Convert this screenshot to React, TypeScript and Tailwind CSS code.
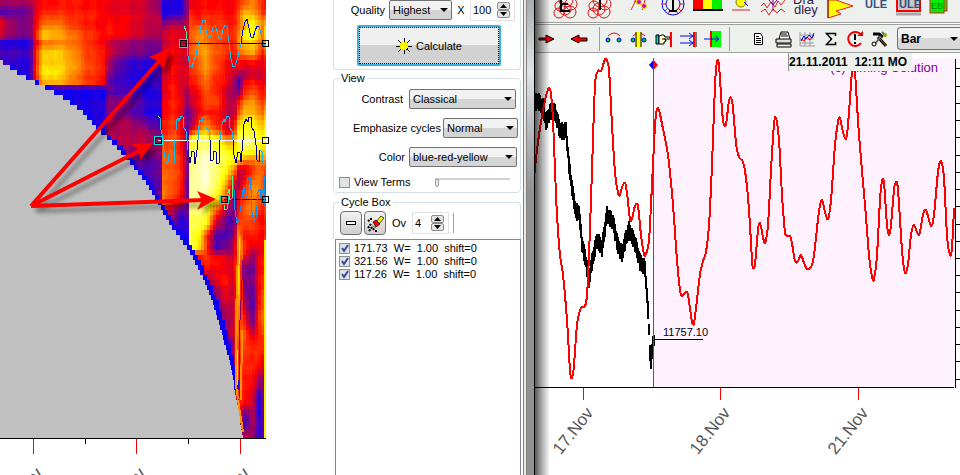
import React, { useState } from "react";

type Point = [number, number];

// each character is one heat value in base 36: 0 blue, a red, k yellow, u white
const HEAT_X = [
  0, 10, 30, 35, 42, 55, 70, 88, 103, 108, 125, 145, 160, 163, 172, 180, 187, 190, 198, 206, 216,
  226, 234, 238, 244, 252, 258, 263, 265,
];

const HEAT_ROWS: [number, string][] = [
  [0, "777 9aabaa 9985 211 69 aaaa abdfdb a"],
  [14, "334 9bcbba 9986 112 5b abba adigfb c"],
  [20, "a65 adecba aa87 455 7c bccb adjjhf g"],
  [26, "965 afgdba ba87 788 8d edcc behlie i"],
  [36, "854 bihfca a976 899 8d gedc bfklie i"],
  [43, "111 9effca 8655 899 7d gfdc bgiigd g"],
  [54, "332 cijgcb 8543 8a9 8d fgdc adfgda c"],
  [64, "221 biihdb 6212 8a9 8c egda 9a9999 a"],
  [74, "221 cjkgcb 5213 8a9 9b dfca 867889 9"],
  [83, "211 aghfca 3222 9a9 8a ceba 61aba9 a"],
  [85, "111 655555 5212 9b9 7a beb9 62aba9 a"],
  [89, "111 111111 3212 9b9 79 bdb8 63bcca b"],
  [98, "111 111111 5521 9ba 68 add8 69efdb c"],
  [112, "111 111112 5521 aba 45 abb8 7dihge h"],
  [124, "111 111111 7742 bcb 45 cfb8 9ikkih j"],
  [130, "111 111111 7774 bcb 49 fhe9 bkmlkj k"],
  [138, "111 111111 7775 cdc 4j onkf fmpnlk k"],
  [145, "111 111111 7777 ddb 4m oomj imqomk k"],
  [158, "111 111111 5544 edc 5p rsqm lkhfhf g"],
  [170, "111 111111 1334 edc 5p rsok f78bed c"],
  [185, "111 111111 1114 fdc 4q rsog 86cfgd a"],
  [200, "111 111111 1114 fca 4p qojb 4adfed d"],
  [210, "111 111111 1112 973 4o pmd6 4aefca c"],
  [222, "111 111111 1111 452 2n nl84 3cdcba b"],
  [235, "111 111111 1111 111 1n lc33 6fbbba b"],
  [251, "111 111111 1111 111 1m jc25 7ic79a k"],
  [253, "111 111111 1111 111 16 bca9 7ib69b k"],
  [266, "111 111111 1111 111 11 9ba9 9h63ab k"],
  [280, "111 111111 1111 111 11 169b 7i54ac k"],
  [300, "111 111111 1111 111 11 1149 7g72ae k"],
  [320, "111 111111 1111 111 11 1146 8eb3cf k"],
  [336, "111 111111 1111 111 11 1118 8ee8bc g"],
  [339, "111 111111 1111 111 11 1111 7ddacc g"],
  [358, "111 111111 1111 111 11 1111 6ccbca 3"],
  [380, "111 111111 1111 111 11 1111 4cba75 3"],
  [400, "111 111111 1111 111 11 1111 1cb815 3"],
  [420, "111 111111 1111 111 11 1111 1a1724 3"],
  [438, "111 111111 1111 111 11 1111 119624 2"],
];

const CONE: Point[] = [
  [0, 60], [17, 72], [35, 82], [60, 95], [80, 109], [96, 127], [108, 138], [128, 159],
  [145, 181], [158, 202], [171, 226], [180, 237], [190, 252], [200, 271], [213, 302],
  [222, 333], [230, 362], [235, 390], [239, 413], [243, 438],
];

function lerp(a: number, b: number, t: number) {
  return a + (b - a) * t;
}

function heatAt(x: number, y: number) {
  let r = 0;
  while (r < HEAT_ROWS.length - 2 && HEAT_ROWS[r + 1][0] <= y) r++;
  let c = 0;
  while (c < HEAT_X.length - 2 && HEAT_X[c + 1] <= x) c++;
  const top = HEAT_ROWS[r][1].replace(/ /g, "");
  const bottom = HEAT_ROWS[r + 1][1].replace(/ /g, "");
  const tx = (x - HEAT_X[c]) / (HEAT_X[c + 1] - HEAT_X[c]);
  const ty = (y - HEAT_ROWS[r][0]) / (HEAT_ROWS[r + 1][0] - HEAT_ROWS[r][0]);
  const value = (s: string) => lerp(parseInt(s[c], 36), parseInt(s[c + 1], 36), tx) / 10;
  return lerp(value(top), value(bottom), ty);
}

function coneLeft(y: number) {
  if (y < CONE[0][1]) return 0;
  for (let i = 0; i < CONE.length - 1; i++) {
    if (y < CONE[i + 1][1]) {
      const t = (y - CONE[i][1]) / (CONE[i + 1][1] - CONE[i][1]);
      return Math.round(lerp(CONE[i][0], CONE[i + 1][0], t));
    }
  }
  return 243;
}

function heatColor(v: number) {
  const b = (n: number) => Math.round(Math.max(0, Math.min(1, n)) * 255);
  if (v < 1) return `rgb(${b(v)},0,${b(1 - v)})`;
  if (v < 2) return `rgb(255,${b(v - 1)},0)`;
  return `rgb(255,255,${b(v - 2)})`;
}

// cells of one colour share one path
function buildHeat() {
  const paths: Record<string, string> = {};
  for (let y = 0; y < 438; y += 5) {
    const h = Math.min(5, 438 - y);
    const left = coneLeft(y + 2);
    for (let x = left; x < 266; ) {
      const w = Math.min(3 - (x % 3), 266 - x);
      const ripple = Math.sin(x * 1.7) * 0.03 + Math.sin(y * 0.9) * 0.03;
      let v = heatAt(x + 1, y + 2) + ripple;
      if (y > 60 && x < left + 4 && y < 390) v = 0.05;
      const color = heatColor(Math.round(Math.max(0, v) * 20) / 20);
      paths[color] = (paths[color] || "") + `M${x} ${y}h${w}v${h}h-${w}z`;
      x += w;
    }
  }
  return Object.entries(paths);
}

const heat = buildHeat();

function smooth(pts: Point[]) {
  let d = `M${pts[0][0]} ${pts[0][1]}`;
  for (let i = 0; i < pts.length - 1; i++) {
    const p0 = pts[Math.max(0, i - 1)];
    const p1 = pts[i];
    const p2 = pts[i + 1];
    const p3 = pts[Math.min(pts.length - 1, i + 2)];
    d += `C${p1[0] + (p2[0] - p0[0]) / 7} ${p1[1] + (p2[1] - p0[1]) / 7} ${p2[0] - (p3[0] - p1[0]) / 7} ${p2[1] - (p3[1] - p1[1]) / 7} ${p2[0]} ${p2[1]}`;
  }
  return d;
}

const RED_LINE: Point[] = [
  [534, 178], [537, 150], [541, 122], [546, 96], [549, 88], [551, 94], [553, 120], [555, 170],
  [557, 215], [560, 255], [563, 275], [567, 320], [570, 370], [572, 378], [574, 365], [577, 325],
  [581, 308], [585, 306], [587, 295], [589, 255], [592, 170], [595, 85], [598, 71], [601, 71],
  [604, 62], [606, 59], [609, 70], [612, 125], [615, 172], [618, 193], [620, 195], [622, 187],
  [625, 183], [627, 193], [630, 219], [632, 219], [635, 206], [638, 206], [641, 235], [644, 254],
  [646, 254], [649, 240], [652, 185], [655, 125], [657, 109], [659, 110], [662, 124], [668, 155],
  [673, 205], [677, 260], [680, 290], [682, 296], [687, 292], [690, 308], [692, 322], [694, 323],
  [697, 300], [700, 274], [703, 261], [706, 252], [709, 225], [712, 165], [715, 85], [717, 62],
  [719, 65], [722, 110], [724, 125], [726, 124], [729, 101], [731, 98], [733, 108], [736, 143],
  [739, 157], [743, 162], [746, 178], [749, 210], [752, 260], [753, 268], [755, 264], [758, 230],
  [760, 223], [763, 237], [765, 243], [768, 225], [771, 170], [774, 124], [776, 118], [779, 140],
  [782, 195], [785, 232], [788, 236], [791, 238], [795, 261], [798, 261], [801, 255], [804, 263],
  [807, 269], [811, 267], [814, 255], [819, 211], [822, 200], [825, 212], [828, 219], [831, 200],
  [835, 145], [838, 122], [840, 118], [843, 132], [846, 139], [848, 125], [851, 84], [853, 62],
  [855, 72], [859, 135], [865, 205], [869, 255], [872, 277], [874, 279], [877, 255], [880, 200],
  [882, 181], [884, 183], [887, 225], [889, 235], [891, 225], [894, 190], [896, 182], [898, 190],
  [902, 250], [905, 273], [908, 264], [911, 235], [914, 225], [919, 235], [923, 215], [926, 210],
  [931, 226], [934, 215], [938, 172], [941, 161], [944, 178], [947, 235], [950, 255], [952, 248],
  [954, 208],
];

const PRICE: Point[] = [
  [535, 103], [538, 101], [543, 107], [546, 122], [550, 112], [555, 112], [560, 131], [566, 131],
  [569, 165], [573, 195], [576, 212], [579, 212], [582, 243], [586, 262], [589, 280], [592, 262],
  [597, 240], [602, 248], [607, 215], [613, 222], [618, 246], [622, 254], [626, 238], [629, 230],
  [635, 243], [640, 262], [645, 268], [648, 310], [650, 352], [651, 362], [653, 342], [654, 342],
];

function priceBars() {
  let d = "";
  for (let x = 535; x <= 654; x++) {
    let i = 0;
    while (i < PRICE.length - 2 && PRICE[i + 1][0] <= x) i++;
    const t = (x - PRICE[i][0]) / (PRICE[i + 1][0] - PRICE[i][0]);
    const y = lerp(PRICE[i][1], PRICE[i + 1][1], t);
    const up = 5 + Math.abs(Math.sin(x * 2.3)) * 4;
    const down = 4 + Math.abs(Math.cos(x * 1.9)) * 5;
    d += `M${x} ${Math.round(y - up)}V${Math.round(y + down)}`;
  }
  return d;
}

const WAVE_1 = "187,45 188,56 190,66 192,67 194,60 196,55 199,41 201,26 203,20 205,20 206,29 208,36 211,36 213,27 215,25 217,31 219,38 221,38 223,29 225,25 227,27 229,42 231,59 233,67 235,66 238,57 241,43";
const WAVE_1_BLUE = "241,43 243,30 245,22 247,19 249,28 251,37 253,38 255,31 257,26 259,26";
const WAVE_2_CYAN = [
  "160,118 161,130 163,137 164,151 166,162 168,162 169,153 171,151 172,164 174,163 174,148 176,130 176,121 178,118 179,121 181,116 183,117 184,128 186,131 187,140 188,150",
  "198,140 199,126 200,120 202,122 203,117 205,117 206,128 209,131 210,140",
  "220,140 222,124 224,119 225,122 227,116 229,117 230,128 232,131 233,140",
  "260,150 262,152 263,164 265,163",
];
const WAVE_2_NAVY = [
  "188,150 190,163 192,151 194,152 195,164 197,150 198,140",
  "210,140 211,161 213,160 214,151 216,152 217,164 219,163 220,140",
  "233,140 234,155 236,163 238,152 240,153 241,162 243,140 244,124 246,119 248,122 249,117 251,117 252,128 254,131 256,145 257,160 259,162 260,150",
];
const WAVE_3 = "233,176 234,190 235,210 237,223 239,220 241,205 243,190 244,188 246,198 247,196 248,178 250,178 251,190 252,212 254,222 256,218 258,192 260,189 261,198 263,190 264,176 265,205";

function Handle({ x, y, ring }: { x: number; y: number; ring?: boolean }) {
  return (
    <g fill="none" shapeRendering="crispEdges">
      {ring && <rect x={x - 3.5} y={y - 3.5} width="8" height="8" stroke="#00e8e0" />}
      <rect x={x - 2.5} y={y - 2.5} width="6" height="6" stroke="#000" />
    </g>
  );
}

function PointerArrows() {
  return (
    <>
      <path d="M31 206L162 58M31 206L143 149M31 206L204 200" strokeWidth="4" fill="none" />
      <path d="M169 48L149 57L157 61L164 69Z" stroke="none" />
      <path d="M153 143L131 144L140 150L140 160Z" stroke="none" />
      <path d="M216 199L197 191L202 200L197 210Z" stroke="none" />
    </>
  );
}

function Spectrum() {
  return (
    <svg width="334" height="475" viewBox="0 0 334 475" role="img" aria-label="Cycle spectrum">
      <rect width="266" height="438" fill="#c0c0c0" />
      <g shapeRendering="crispEdges">
        {heat.map(([color, d]) => (
          <path key={color} d={d} fill={color} />
        ))}
        <g fill="none">
          <path d="M240 235L238 265L237 300L236 330" stroke="#ff9000" strokeWidth="3" />
          <path d="M240 238L239 265L238 295M237 350V385M241 360L242 400" stroke="#ffe000" />
          <path d="M236 330L236 385L238 400L243 432M242 330L241 400" stroke="#ff9000" strokeWidth="2" />
          <path d="M243 260L240 320L239 400M246 400L245 415" stroke="#900070" />
        </g>
        <path d="M265 240V438" stroke="#ffee00" strokeWidth="2" />
        <path d="M0 438.500H266" stroke="#000" />
        <path d="M85.500 439V444M188.500 439V444" stroke="#000" />
        <path d="M33.500 439V454M136.500 439V454M240.500 439V454" stroke="#f00" />
      </g>
      <g shapeRendering="crispEdges" fill="none">
        <path d="M183 43.500H266M224 199.500H266" stroke="#000" />
        <path d="M158 140.500H266" stroke="#fff" />
        <polyline points="184,26 186,31 187,45" stroke="#60f080" />
        <polyline points={WAVE_1} stroke="#20b8f0" />
        <polyline points={WAVE_1_BLUE} stroke="#0010e0" />
        <polyline points="259,26 261,34 263,44 265,45" stroke="#20a0f0" />
        <polyline points="158,116 160,118" stroke="#60f080" />
        {WAVE_2_CYAN.map((p) => (
          <polyline key={p} points={p} stroke="#18b8e8" />
        ))}
        {WAVE_2_NAVY.map((p) => (
          <polyline key={p} points={p} stroke="#000090" />
        ))}
        <polyline points="224,205 225,210 227,209 227,196 229,189 230,200 232,198 233,176" stroke="#60f080" />
        <polyline points={WAVE_3} stroke="#1090f0" />
      </g>
      <Handle x={183} y={43} ring />
      <Handle x={158} y={140} ring />
      <Handle x={224} y={199} ring />
      {[43, 140, 199].map((y) => (
        <Handle key={y} x={265} y={y} />
      ))}
      <g transform="translate(5 5)" fill="#000" stroke="#000" opacity="0.35" className="blur-[2px]">
        <PointerArrows />
      </g>
      <g fill="#f00" stroke="#f00">
        <PointerArrows />
      </g>
      <g className="font-['Liberation_Sans',sans-serif] text-[18px]" fill="#555" textAnchor="end">
        <text transform="translate(44 474) rotate(-52)">15.Nov</text>
        <text transform="translate(147 474) rotate(-52)">16.Nov</text>
        <text transform="translate(251 474) rotate(-52)">17.Nov</text>
      </g>
    </svg>
  );
}

type SelectProps = { id: string; options: string[]; className: string };

function Dropdown({ id, options, className }: SelectProps) {
  return (
    <div className={`relative ${className}`}>
      <select
        id={id}
        className="h-5 w-full appearance-none rounded-xs border border-[#707070] bg-linear-to-b from-[#f2f2f2] from-50% to-[#d4d4d4] to-50% pl-[3px] text-[11px] leading-4"
      >
        {options.map((o) => (
          <option key={o}>{o}</option>
        ))}
      </select>
      <svg className="pointer-events-none absolute top-2 right-1" width="8" height="5" viewBox="0 0 8 5">
        <path d="M0 0H8L4 4Z" />
      </svg>
    </div>
  );
}

function Spinner({ label, value, className }: { label: string; value: number; className: string }) {
  const [amount, setAmount] = useState(value);
  return (
    <div className={`flex h-[22px] items-center border border-[#e2e2e2] pr-1 ${className}`}>
      <input
        aria-label={label}
        value={amount}
        onChange={(e) => setAmount(Number(e.target.value) || 0)}
        className="w-full min-w-0 pl-[2px] text-[11px] outline-none"
      />
      <div className="flex flex-col">
        {[1, -1].map((step) => (
          <button
            key={step}
            type="button"
            aria-label={step > 0 ? `Increase ${label}` : `Decrease ${label}`}
            onClick={() => setAmount(amount + step)}
            className="flex h-2 w-[13px] items-center justify-center rounded-xs border border-[#8a8a8a] bg-[#e4e4e4]"
          >
            <svg width="7" height="4" viewBox="0 0 7 4">
              <path d={step > 0 ? "M0 4H7L3.500 0Z" : "M0 0H7L3.500 4Z"} />
            </svg>
          </button>
        ))}
      </div>
    </div>
  );
}

function Tick({ id, label, checked }: { id: string; label: string; checked?: boolean }) {
  const [on, setOn] = useState(!!checked);
  return (
    <label htmlFor={id} className="flex items-center gap-1 whitespace-pre">
      <span className="relative flex">
        <input
          id={id}
          type="checkbox"
          checked={on}
          onChange={() => setOn(!on)}
          className="size-[11px] appearance-none border border-[#8e8f8f] bg-[#e0e3e6]"
        />
        {on && (
          <svg className="pointer-events-none absolute inset-0" width="11" height="11" viewBox="0 0 11 11">
            <path d="M3 5L5 8L9 2" fill="none" stroke="#33479c" strokeWidth="2" />
          </svg>
        )}
      </span>
      {label}
    </label>
  );
}

const CYCLES = ["171.73", "321.56", "117.26"];

function Settings() {
  return (
    <section className="flex w-[188px] shrink-0 flex-col text-[11px] leading-[14px]">
      <div className="flex h-[70px] flex-col rounded-b-sm border border-t-0 border-[#d5dfe5]">
        <div className="-mt-px flex items-center gap-1 self-end pr-[5px]">
          <label htmlFor="quality">Quality</label>
          <Dropdown id="quality" options={["Highest", "High", "Low"]} className="w-[63px]" />
          <span className="w-[10px] text-center">X</span>
          <Spinner label="Repeat" value={100} className="w-[45px]" />
        </div>
        <button
          type="button"
          className="mt-1 ml-[23px] flex h-[41px] w-[144px] items-center justify-center rounded-xs border-2 border-[#3ab0e0] bg-linear-to-b from-[#f0f0f0] from-50% to-[#d2d2d2] to-50%"
        >
          <span className="flex h-full w-full items-center justify-center gap-1 border border-dotted border-black">
            <svg width="16" height="16" viewBox="0 0 16 16" stroke="#000" shapeRendering="crispEdges">
              <path d="M8 0V16M0 8H16M2 2L14 14M14 2L2 14" />
              <circle cx="8" cy="8" r="4" fill="#ff0" stroke="#ee0" />
              <path d="M10 12L12 10" />
            </svg>
            Calculate
          </span>
        </button>
      </div>

      <fieldset className="mt-px h-[122px] rounded-sm border border-[#d5dfe5]">
        <legend className="ml-[5px] px-[2px]">View</legend>
        <div className="flex flex-col gap-[9px] pt-1">
          <div className="flex items-center justify-end gap-[6px] pr-1">
            <label htmlFor="contrast">Contrast</label>
            <Dropdown id="contrast" options={["Classical", "Linear"]} className="w-[107px]" />
          </div>
          <div className="flex items-center justify-end gap-[2px] pr-[2px]">
            <label htmlFor="emphasize">Emphasize cycles</label>
            <Dropdown id="emphasize" options={["Normal", "Strong"]} className="w-[75px]" />
          </div>
          <div className="flex items-center justify-end gap-1 pr-[3px]">
            <label htmlFor="color">Color</label>
            <Dropdown id="color" options={["blue-red-yellow", "grayscale"]} className="w-[108px]" />
          </div>
        </div>
        <div className="mt-2 flex items-center justify-between pr-[10px] pl-[5px]">
          <Tick id="terms" label="View Terms" />
          <input
            type="range"
            aria-label="Terms"
            defaultValue={0}
            className="h-2 w-[75px] appearance-none border-t-2 border-[#d0d0d0] [&::-webkit-slider-thumb]:h-2 [&::-webkit-slider-thumb]:w-1 [&::-webkit-slider-thumb]:appearance-none [&::-webkit-slider-thumb]:rounded-b-sm [&::-webkit-slider-thumb]:border [&::-webkit-slider-thumb]:border-[#a0a0a0] [&::-webkit-slider-thumb]:bg-[#e8e8e8]"
          />
        </div>
      </fieldset>

      <fieldset className="mt-[2px] h-[44px] rounded-t-sm border border-b-0 border-[#d5dfe5]">
        <legend className="ml-[5px] px-[2px]">Cycle Box</legend>
        <div className="flex items-center gap-[2px] pt-[2px] pl-[6px]">
          <button
            type="button"
            aria-label="Remove cycle"
            className="flex h-6 w-[22px] items-center justify-center rounded-sm border border-[#707070] bg-linear-to-b from-[#f2f2f2] to-[#cfcfcf]"
          >
            <span className="h-1 w-[10px] border border-black bg-white" />
          </button>
          <button
            type="button"
            aria-label="Clear cycles"
            className="flex h-6 w-[22px] items-center justify-center rounded-sm border border-[#707070] bg-linear-to-b from-[#f2f2f2] to-[#cfcfcf]"
          >
            <svg width="18" height="18" viewBox="0 0 18 18">
              <path d="M10 8L15 2L18 4L13 10Z" fill="#ff0" stroke="#000" strokeWidth="0.7" />
              <path d="M7 8L10 6L14 10L10 13Z" fill="#f00" stroke="#000" strokeWidth="0.7" />
              <path d="M2 14L5 10M3 17L7 12M7 16L9 13M2 6L4 8M5 4V6M9 17H12" stroke="#000" strokeWidth="2" strokeDasharray="2 1" />
            </svg>
          </button>
          <span className="w-[22px] pl-1">Ov</span>
          <Spinner label="Overtones" value={4} className="w-[37px]" />
          <span className="ml-[2px] h-5 border-l border-[#a0a0a0]" />
        </div>
      </fieldset>

      <ul className="ml-[2px] flex-1 border border-b-0 border-[#828790] pt-px pl-[3px]">
        {CYCLES.map((c) => (
          <li key={c} className="h-[13px]">
            <Tick id={c} label={`${c}  W=  1.00  shift=0`} checked />
          </li>
        ))}
      </ul>
    </section>
  );
}

type Tool = { name: string; icon: React.ReactNode };

const CIRCLES = (
  <g fill="none" stroke="#e01010">
    <circle cx="18" cy="0" r="7" />
    <circle cx="12" cy="6" r="5" />
    <circle cx="23" cy="4" r="6" />
    <circle cx="11" cy="13" r="5" />
    <circle cx="22" cy="12" r="6" />
    <circle cx="17" cy="9" r="6" />
  </g>
);

const TOP_TOOLS: Tool[] = [
  { name: "Ephemeris", icon: <>{CIRCLES}<path d="M13 0V11H22M13 4H20" stroke="#000" strokeWidth="2" fill="none" /></> },
  { name: "Transits", icon: <>{CIRCLES}<path d="M18 0V10" stroke="#000" strokeWidth="2" /></> },
  { name: "Aspects", icon: <><path d="M15 10L20 0M18 1L31 7M26 10L29 0" stroke="#e02020" /><circle cx="23" cy="2" r="3" fill="#f0e000" /><circle cx="28" cy="6" r="3" fill="#f0e000" /><circle cx="23" cy="2" r="2" fill="#d000d0" /><circle cx="28" cy="6" r="2" fill="#d000d0" /></> },
  { name: "Wheel", icon: <><circle cx="23" cy="4" r="11" fill="none" stroke="#0000e0" /><circle cx="23" cy="4" r="7" fill="none" stroke="#0000e0" /><path d="M12 4H16M30 4H34M15 11L18 8M31 11L28 8M18 14L20 10M28 14L26 10" stroke="#e01010" /><path d="M23 0V11M19 11H27" stroke="#000" strokeWidth="2" /></> },
  { name: "Color bar", icon: <><path d="M9 0H19V9H9Z" fill="#f00" /><path d="M19 0H28V9H19Z" fill="#ff0" /><path d="M28 0H38V9H28Z" fill="#0e0" /><path d="M9 9H39V11H9Z" fill="#000" /></> },
  { name: "Sun line", icon: <><circle cx="23" cy="2" r="5" fill="#ff0" stroke="#808000" /><path d="M14 10H32" stroke="#e02020" /><path d="M26 2L30 6" stroke="#00f" /></> },
  { name: "Waves", icon: <><path d="M9 6L12 3L15 8L19 2L23 7L26 1L29 5L33 0M9 12L13 9L17 15L21 9L25 13L29 9L33 12" fill="none" stroke="#e02020" /><path d="M21 0V11M17 0L21 5L25 0" stroke="#800080" strokeWidth="1" fill="none" /></> },
  { name: "Bradley", icon: <g fill="#302050" className="text-[13px]"><text x="7" y="4">Dra</text><text x="8" y="14">dley</text></g> },
  { name: "Profile", icon: <><path d="M8 0H16L33 6L16 11L21 14L8 18Z" fill="#ff0" stroke="#e02020" /><path d="M8 0V18" stroke="#800" /></> },
  { name: "ULE", icon: <text x="11" y="8" fill="#305080" className="text-[11px] font-bold">ULE</text> },
  { name: "ULE active", icon: <><rect x="9" y="-8" width="23" height="19" fill="#c8c8c8" stroke="#f00" strokeWidth="2" /><path d="M8 14H33" stroke="#a8a8a8" strokeWidth="3" /><text x="11" y="8" fill="#305080" className="text-[11px] font-bold">ULE</text></> },
  { name: "EB", icon: <><rect x="11" y="-4" width="14" height="15" fill="#0e0" stroke="#e02020" /><rect x="8" y="-2" width="14" height="15" fill="#0e0" stroke="#e02020" /><text x="9" y="9" fill="#008000" className="text-[9px]">EB</text></> },
];

const DOTS = (
  <>
    <path d="M6 9Q12 3 18 9" fill="none" stroke="#f00" />
    <circle cx="6" cy="13" r="2" fill="#0c0" stroke="#00f" />
    <circle cx="17" cy="13" r="2" fill="#0c0" stroke="#00f" />
  </>
);

const MOVE_TOOLS: Tool[] = [
  { name: "Forward", icon: <path d="M4 11H11V8L19 12L11 16V13H4Z" fill="#f00" stroke="#000" /> },
  { name: "Back", icon: <path d="M20 11H12V8L4 12L12 16V14H20Z" fill="#f00" stroke="#000" /> },
];

const CURSOR_TOOLS: Tool[] = [
  { name: "Link", icon: DOTS },
  { name: "Link at line", icon: <>{DOTS}<path d="M9 5H14V20H9Z" fill="#ff0" /><path d="M9 5V20M14 5V20" stroke="#000" /></> },
  { name: "Point", icon: <><path d="M4 8H7V17H4Z" fill="#0cc" stroke="#000" /><path d="M7 9L10 8H12L13 10H18V12H13V13H14V14H13V15H12V17H7Z" fill="#ffc" stroke="#000" /><path d="M10 12H13" stroke="#000" /><path d="M19 5V20" stroke="#f00" strokeWidth="2" /></> },
  { name: "Snap", icon: <><path d="M3 9H16M3 16H16M12 6L16 9L12 12M12 13L16 16L12 19" fill="none" stroke="#00f" /><path d="M17 5V20" stroke="#f00" strokeWidth="2" /><path d="M19 5V20" stroke="#000" /></> },
  { name: "Extend", icon: <><path d="M9 4H19V20H9Z" fill="#0f0" /><path d="M9 4V20" stroke="#f00" strokeWidth="2" /><path d="M2 12H16M13 9L17 12L13 15" stroke="#00f" fill="none" /></> },
];

const FILE_TOOLS: Tool[] = [
  { name: "New", icon: <path d="M7.500 6.500H13.500L15.500 9.500V17.500H7.500ZM9 9.500H12M9 11.500H14M9 13.500H14M9 15.500H14" fill="#fff" stroke="#000" /> },
  { name: "Print", icon: <><path d="M8 12L10 5H17L19 12" fill="#fff" stroke="#000" /><path d="M10 7H16M10 9H17" stroke="#000" /><path d="M5 12H20V16H5Z" fill="#ddd" stroke="#000" /><path d="M6 17H20V20H6Z" fill="#eed" stroke="#000" /></> },
  { name: "Chart", icon: <><path d="M5 5V19H20M5 8H19M5 12H19M5 16H19M10 5V19M15 5V19" stroke="#999" fill="none" /><path d="M6 12L9 14L12 10L15 13L19 8" stroke="#f00" fill="none" /><path d="M6 14L9 9L11 12L14 8L17 11L19 6" stroke="#00d" fill="none" /></> },
  { name: "Sum", icon: <path d="M16.500 9V6.500H7.500L12.500 12L7.500 17.500H16.500V15" fill="none" stroke="#000" strokeWidth="1.500" /> },
  { name: "Refresh", icon: <><path d="M18 8A7 7 0 1 0 18 16" fill="none" stroke="#e00" strokeWidth="2" /><path d="M14 9H20V4Z" fill="#e00" /><path d="M12 7V13M12 15V17" stroke="#000" strokeWidth="2" /></> },
  { name: "Tools", icon: <><path d="M6 7H12L16 10" stroke="#000" strokeWidth="3" fill="none" /><path d="M11 10L19 19" stroke="#000" strokeWidth="3" /><path d="M15 5L18 8M14 9L8 17" stroke="#666" strokeWidth="2" /><path d="M13 12L19 19" stroke="#a60" /><circle cx="7" cy="17" r="2" fill="#eee" stroke="#000" /><circle cx="18" cy="8" r="2" fill="#8a0" /></> },
];

function ToolButtons({ tools, width }: { tools: Tool[]; width: string }) {
  return (
    <>
      {tools.map((t) => (
        <button key={t.name} type="button" aria-label={t.name} title={t.name} className={`flex shrink-0 ${width}`}>
          <svg className="overflow-visible" width="24" height="24" viewBox="0 0 24 24">
            {t.icon}
          </svg>
        </button>
      ))}
    </>
  );
}

function Divider() {
  return <span className="h-6 shrink-0 border-l border-[#a0a0a0]" />;
}

function Chart() {
  const ticks = [68, 86, 103, 120, 137, 155, 172, 189, 206, 224, 241, 258, 275, 292, 310, 327, 344, 361, 379];
  return (
    <svg viewBox="535 53 425 422" className="block w-full" role="img" aria-label="Price and projection">
      <rect x="654" y="58" width="301" height="329" fill="#fff2ff" />
      <g shapeRendering="crispEdges" fill="none">
        <path d={priceBars()} stroke="#000" strokeWidth="2" />
        <path d="M535 387.500H954M655 339.500H703M955.500 59V388" stroke="#000" />
        <path d={ticks.map((y) => `M956 ${y}.5H960`).join("")} stroke="#000" />
        <path d="M583.500 388V400M720.500 388V400M858.500 388V400" stroke="#f00" />
        <path d="M653.500 58V387" stroke="#008080" />
        <path d={smooth(RED_LINE)} stroke="#f00" strokeWidth="2" strokeLinejoin="round" />
      </g>
      <path d="M653.500 60L649 65L653.500 70Z" fill="#00f" />
      <path d="M653.500 60L658 65L653.500 70Z" fill="#f00" />
      <g className="font-['Liberation_Sans',sans-serif]">
        <text x="663" y="336" className="text-[11px]">11757.10</text>
        <text x="938" y="72" textAnchor="end" fill="#8000a0" className="text-[13px]">(c) Timing Solution</text>
        <g className="text-[17px]" fill="#555" textAnchor="end">
          <text transform="translate(594 413) rotate(-52)">17.Nov</text>
          <text transform="translate(731 413) rotate(-52)">18.Nov</text>
          <text transform="translate(869 413) rotate(-52)">21.Nov</text>
        </g>
      </g>
    </svg>
  );
}

function ChartWindow() {
  return (
    <section className="relative min-w-0 flex-1 overflow-hidden border-l border-black">
      <div className="flex h-[23px] overflow-hidden border-b border-[#a0a0a0] bg-[#eef0ee] pl-[13px]">
        <ToolButtons tools={TOP_TOOLS} width="w-[34px]" />
      </div>
      <div className="mt-px flex h-[29px] items-center overflow-hidden border-y border-[#a0a0a0] bg-[#eef0ee]">
        <ToolButtons tools={MOVE_TOOLS} width="w-8" />
        <Divider />
        <span className="w-[2px] shrink-0" />
        <ToolButtons tools={CURSOR_TOOLS} width="w-[25px]" />
        <span className="w-[2px] shrink-0" />
        <Divider />
        <span className="w-[17px] shrink-0" />
        <ToolButtons tools={FILE_TOOLS} width="w-6" />
        <div className="relative ml-[6px] min-w-0 flex-1">
          <select
            aria-label="Chart type"
            className="block h-[23px] w-full appearance-none rounded-l-sm border border-r-0 border-[#707070] bg-linear-to-b from-[#f2f2f2] from-50% to-[#d8d8d8] to-50% pl-[3px] text-[12px] font-bold"
          >
            <option>Bar</option>
            <option>Line</option>
          </select>
          <svg className="pointer-events-none absolute top-[10px] right-[2px]" width="8" height="5" viewBox="0 0 8 5">
            <path d="M0 0H8L4 4Z" />
          </svg>
        </div>
      </div>
      <div className="relative">
        <Chart />
        <div className="absolute top-0 right-[48px] h-[18px] w-[124px] border-l border-[#909090] bg-[#eef0ee] text-[12px] leading-[18px] font-bold whitespace-pre">
          21.11.2011  12:11 MO
        </div>
      </div>
      {/* shadow of the settings window */}
      <div className="pointer-events-none absolute inset-y-0 left-0 w-[15px] bg-linear-to-r from-black/65 via-black/30 to-transparent" />
    </section>
  );
}

export default function App() {
  return (
    <main className="flex bg-white font-['Liberation_Sans',sans-serif] text-black">
      <div className="-mr-px w-[334px] shrink-0">
        <Spectrum />
      </div>
      <Settings />
      <div className="ml-[2px] w-1 shrink-0 border-x border-[#808080] bg-[#e8e8e8]" />
      <div className="w-[7px] shrink-0 bg-linear-to-b from-[#a8acae] via-[#e0e4e6] via-15% to-[#909294] to-40%" />
      <ChartWindow />
    </main>
  );
}
